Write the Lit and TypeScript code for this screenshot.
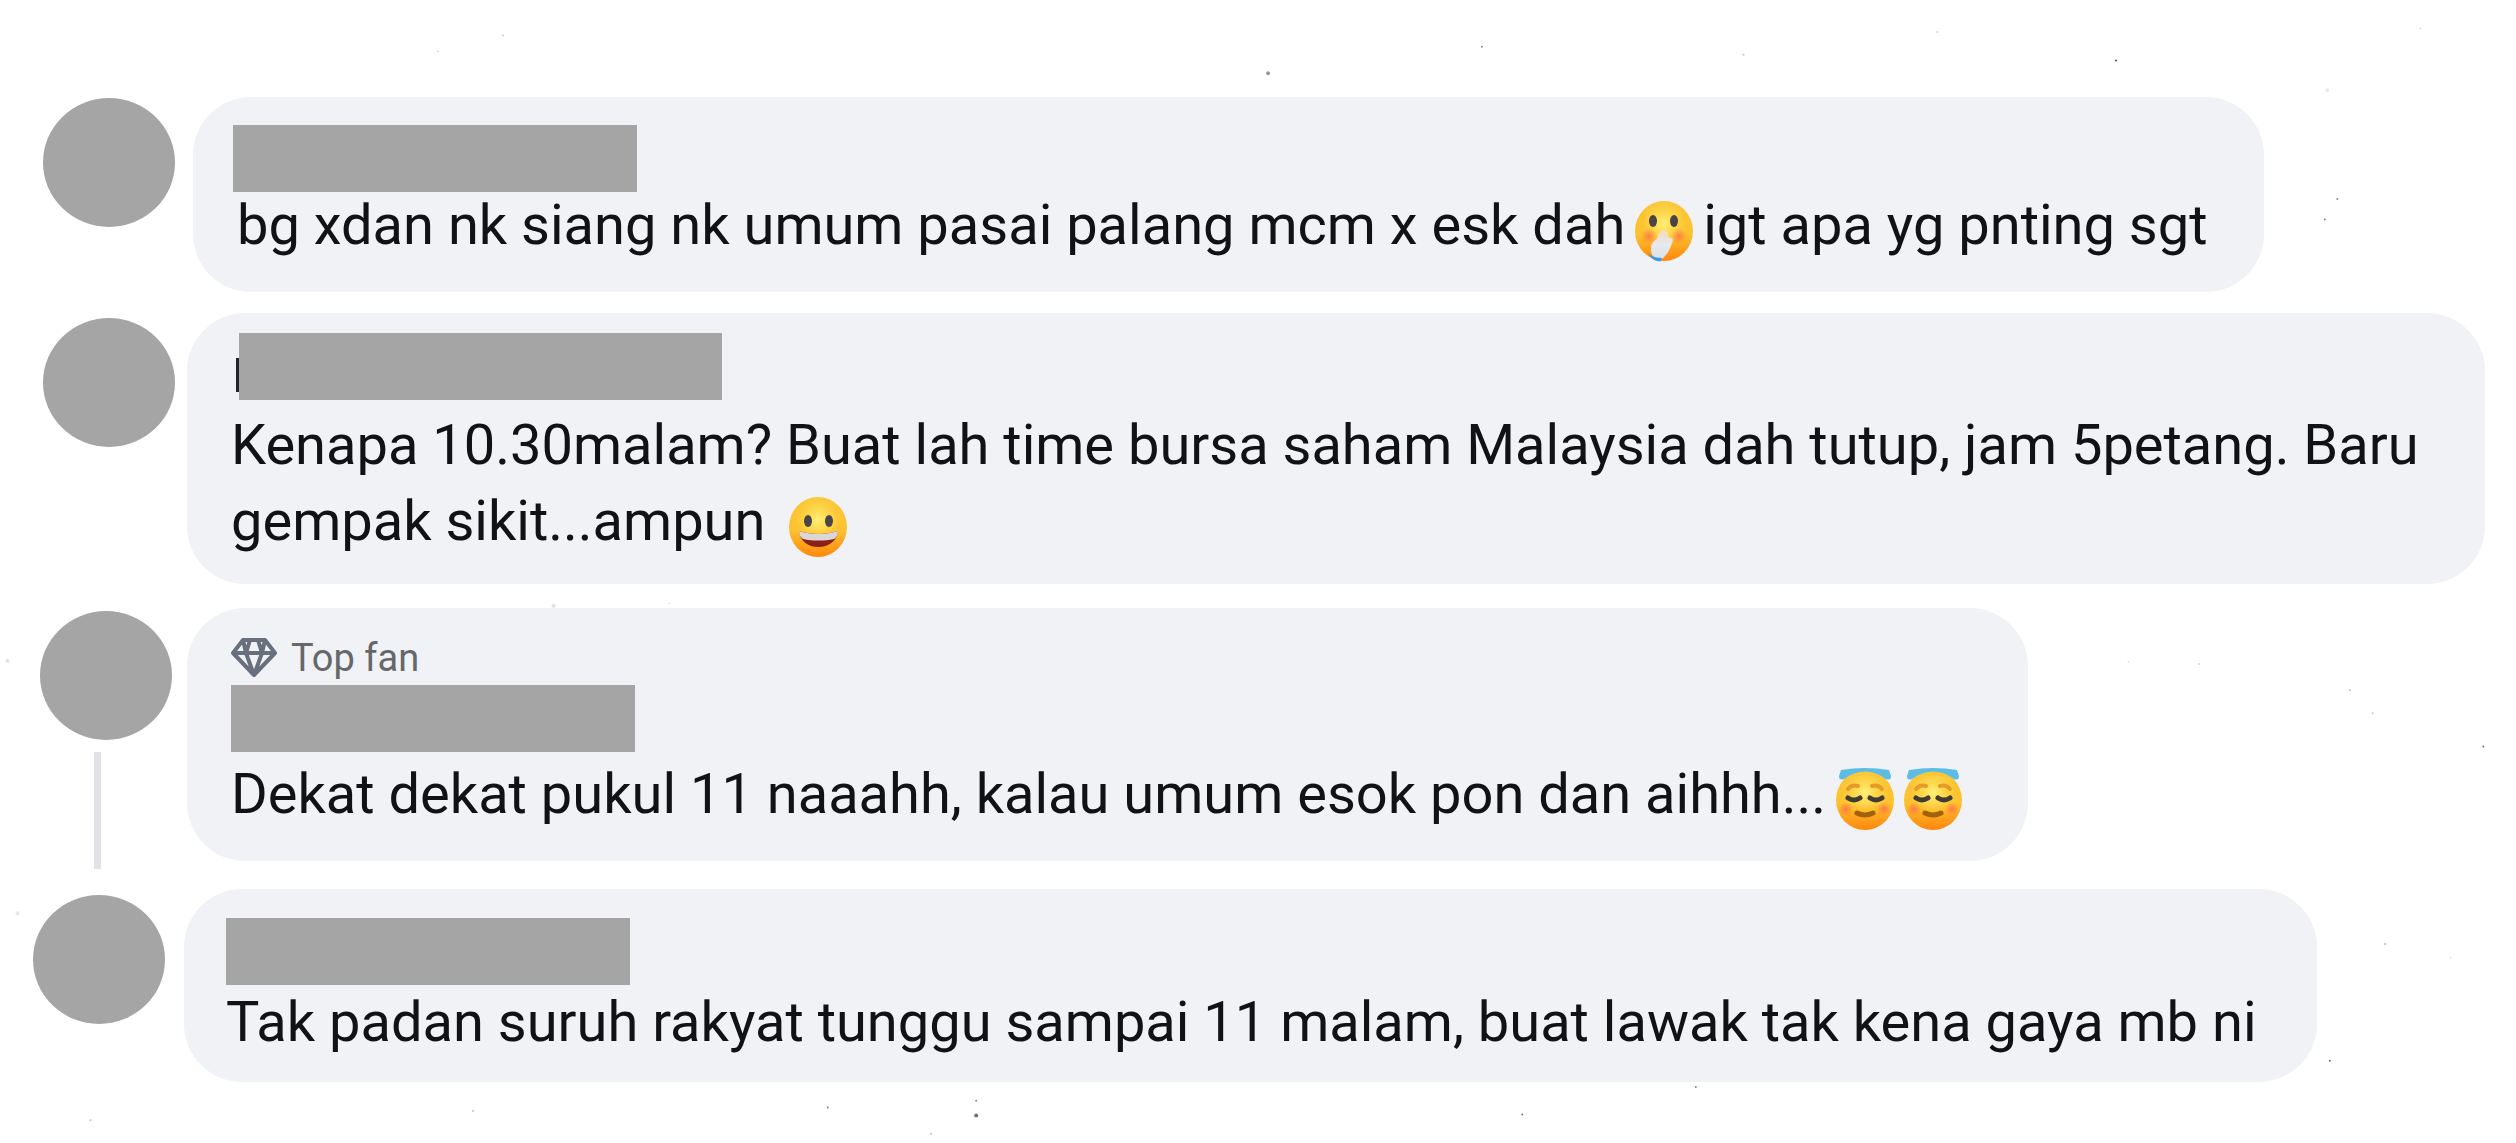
import { LitElement, html, svg, css, nothing, type TemplateResult } from "lit";
import { customElement, property } from "lit/decorators.js";

type Part = string | { emoji: "gasp" | "grin" | "halo"; label: string };

interface Comment {
  variant: string;
  topFan?: boolean;
  thread?: boolean;
  peek?: boolean;
  parts: Part[];
}

const COMMENTS: Comment[] = [
  {
    variant: "first",
    parts: [
      "bg xdan nk siang nk umum pasai palang mcm x esk dah",
      { emoji: "gasp", label: "🤭" },
      "igt apa yg pnting sgt",
    ],
  },
  {
    variant: "second",
    peek: true,
    parts: [
      "Kenapa 10.30malam? Buat lah time bursa saham Malaysia dah tutup, jam 5petang. Baru gempak sikit...ampun ",
      { emoji: "grin", label: "😀" },
    ],
  },
  {
    variant: "third",
    topFan: true,
    thread: true,
    parts: [
      "Dekat dekat pukul 11 naaahh, kalau umum esok pon dan aihhh...",
      { emoji: "halo", label: "😇" },
      { emoji: "halo", label: "😇" },
    ],
  },
  {
    variant: "fourth",
    parts: ["Tak padan suruh rakyat tunggu sampai 11 malam, buat lawak tak kena gaya mb ni"],
  },
];

/* x and y in percent of the page, radius in pixels, opacity */
const SPECKS: [number, number, number, number][] = [
  [50.4, 6.4, 2, 0.5], [84.1, 5.3, 1, 0.9], [58.9, 4.1, 1, 0.6], [69.3, 4.8, 1, 0.3],
  [20, 3.1, 1, 0.25], [17.4, 4.5, 1, 0.2], [92.9, 17.4, 1, 0.6], [92.4, 19.2, 1, 0.6],
  [92.5, 7.9, 2, 0.1], [38.8, 96.3, 1, 0.6], [38.8, 97.6, 2, 0.7], [32.9, 96.9, 1, 0.6],
  [60.5, 97.5, 1, 0.7], [92.6, 92.8, 1, 0.7], [67.4, 95.1, 1, 0.6], [18.8, 97.2, 1, 0.3],
  [37, 99.2, 1, 0.3], [94.8, 82.6, 1, 0.4], [97.4, 83.8, 1, 0.15], [98.7, 65.3, 1, 0.7],
  [93.4, 60.4, 1, 0.3], [94.3, 62.4, 1, 0.25], [0.3, 57.8, 2, 0.15], [0.7, 79.9, 2, 0.12],
  [22, 53, 2, 0.15], [26.6, 52.8, 1, 0.15], [84.6, 57.9, 1, 0.15], [87.4, 58.1, 1, 0.2],
  [77, 2.8, 1, 0.2], [96.2, 2.5, 1, 0.15], [3.6, 98, 1, 0.3],
];

const gradients = svg`
  <defs>
    <linearGradient id="skin" x1="0" y1="0" x2="0" y2="1">
      <stop offset="0" stop-color="#fbc638"/>
      <stop offset="0.55" stop-color="#fdc22f"/>
      <stop offset="1" stop-color="#fe870d"/>
    </linearGradient>
    <radialGradient id="glow" cx="0.5" cy="0.38" r="0.4">
      <stop offset="0" stop-color="#fff07a"/>
      <stop offset="1" stop-color="#ffe04a" stop-opacity="0"/>
    </radialGradient>
    <radialGradient id="blush">
      <stop offset="0" stop-color="#ff6e4e" stop-opacity="0.85"/>
      <stop offset="1" stop-color="#ff7a45" stop-opacity="0"/>
    </radialGradient>
    <linearGradient id="hand" x1="0" y1="0" x2="0" y2="1">
      <stop offset="0" stop-color="#f3dcc0"/>
      <stop offset="0.5" stop-color="#e8e8ee"/>
      <stop offset="1" stop-color="#dcdfe8"/>
    </linearGradient>
  </defs>`;

const face = svg`
  <ellipse cx="29" cy="33" rx="29" ry="30" fill="url(#skin)"/>
  <ellipse cx="29" cy="33" rx="29" ry="30" fill="url(#glow)"/>`;

const features = {
  gasp: svg`
    <ellipse cx="18" cy="23" rx="4" ry="6" fill="#4a4447"/>
    <ellipse cx="39" cy="23" rx="4" ry="6" fill="#4a4447"/>
    <circle cx="14" cy="38" r="8" fill="url(#blush)"/>
    <circle cx="44" cy="38" r="8" fill="url(#blush)"/>
    <path d="M29 32C32 32 33 36 34 40C37 39 39 41 37 45C35 52 31 59 25 62C19 61 16 57 16 51C16 46 18 43 22 41C23 36 26 32 29 32Z" fill="url(#hand)"/>
    <path d="M13 55C17 59 22 60 27 60L26 63C21 64 16 61 13 55Z" fill="#3499ea"/>`,
  grin: svg`
    <ellipse cx="19" cy="27" rx="4" ry="6" fill="#48464a"/>
    <ellipse cx="40" cy="27" rx="4" ry="6" fill="#48464a"/>
    <path d="M10 37C22 41 37 41 49 37C48 47 40 53 29 53C19 53 11 47 10 37Z" fill="#8a2114"/>
    <path d="M10 37C22 41 37 41 49 37C49 41 47 44 45 45C35 47 24 47 14 45C11 43 10 40 10 37Z" fill="#dcd6d8"/>`,
  halo: svg`
    <path d="M5 3Q29 -1 53 3L55 9Q55 14 50 12Q29 2 8 12Q3 14 3 9Z" fill="#5bbde6"/>
    <path d="M9 11Q29 -2 49 11Q29 6 9 11Z" fill="#fbc638"/>
    <path d="M12 22Q16 17 22 19M46 22Q42 17 36 19" fill="none" stroke="#e59b28" stroke-width="4" stroke-linecap="round"/>
    <path d="M12 31Q18 35 24 31M34 31Q40 35 46 31" fill="none" stroke="#403c35" stroke-width="5" stroke-linecap="round"/>
    <circle cx="10" cy="42" r="7" fill="url(#blush)"/>
    <circle cx="48" cy="42" r="7" fill="url(#blush)"/>
    <path d="M21 46Q29 50 37 46" fill="none" stroke="#a1620c" stroke-width="5" stroke-linecap="round"/>`,
};

@customElement("comment-row")
class CommentRow extends LitElement {
  static styles = css`
    :host { display: block; }
    .row { display: flex; align-items: stretch; padding-right: 31px; }
    .side { display: flex; flex-direction: column; flex: none; }
    .avatar { width: 132px; height: 129px; border-radius: 50%; background: #a5a5a5; }
    .thread { flex: 1; width: 7px; margin: 12px 0 -8px 54px; background: #e0e2e8; }
    .bubble { min-width: 0; border-radius: 58px; background: #f0f2f6; }
    .name { position: relative; width: 404px; height: 67px; background: #a5a5a5; }
    .name.long { width: 483px; margin-left: 8px; }
    .name.long::before {
      content: ""; position: absolute; left: -3px; top: 25px; width: 3px; height: 34px; background: #222326;
    }
    .text { margin: 0; font-size: 56px; line-height: 76px; color: #111214; }
    .badge { display: flex; align-items: center; gap: 14px; height: 48px; font-size: 38px; line-height: 48px; color: #65676b; }
    .diamond { width: 46px; height: 40px; }
    .emoji { width: 58px; height: 64px; margin: 0 10px; vertical-align: -18px; }
    .emoji + .emoji { margin-left: 0; }

    .first { padding-left: 43px; gap: 18px; }
    .first .side { padding-top: 1px; }
    .first .bubble { padding: 28px 56px 29px 40px; }
    .first .name { margin-bottom: -5px; }
    .first .text { padding-left: 4px; }

    .second { padding-left: 43px; gap: 12px; }
    .second .side { padding-top: 5px; }
    .second .bubble { padding: 20px 45px 25px 44px; }
    .second .name { margin-bottom: 7px; }

    .third { padding-left: 40px; gap: 15px; margin-top: 3px; }
    .third .side { padding-top: 3px; }
    .third .bubble { padding: 26px 56px 29px 44px; }
    .third .badge { margin-bottom: 3px; }
    .third .name { margin-bottom: 4px; }

    .fourth { padding-left: 33px; gap: 19px; margin-top: 7px; }
    .fourth .side { padding-top: 6px; }
    .fourth .bubble { padding: 29px 60px 22px 42px; }
    .fourth .name { margin-bottom: -1px; }
  `;

  @property({ attribute: false }) comment!: Comment;

  private part(p: Part): string | TemplateResult {
    if (typeof p === "string") return p;
    return html`<svg class="emoji" viewBox="0 0 58 64" role="img" aria-label=${p.label}>
      ${gradients}${face}${features[p.emoji]}
    </svg>`;
  }

  render() {
    const c = this.comment;
    return html`<article class="row ${c.variant}">
      <div class="side">
        <div class="avatar"></div>
        ${c.thread ? html`<div class="thread"></div>` : nothing}
      </div>
      <div class="bubble">
        ${c.topFan
          ? html`<div class="badge">
              <svg class="diamond" viewBox="0 0 46 40" aria-hidden="true">
                <path d="M12 2H34L44 15L23 37L2 15Z M2 15H44 M12 2L15 15L23 37L31 15L34 2 M15 15L19 2 M31 15L27 2"
                  fill="none" stroke="#69707d" stroke-width="4" stroke-linejoin="round"/>
              </svg>
              <span>Top fan</span>
            </div>`
          : nothing}
        <div class="name ${c.peek ? "long" : ""}"></div>
        <p class="text">${c.parts.map((p) => this.part(p))}</p>
      </div>
    </article>`;
  }
}

@customElement("app-root")
class AppRoot extends LitElement {
  static styles = css`
    :host {
      display: block; position: relative; min-height: 100vh; box-sizing: border-box; overflow: hidden;
      padding: 97px 0 60px; background: #fff; font-family: Roboto, "Open Sans", sans-serif;
    }
    .specks { position: absolute; inset: 0; width: 100%; height: 100%; pointer-events: none; }
    .list { display: flex; flex-direction: column; gap: 21px; }
  `;

  render() {
    return html`
      <svg class="specks" aria-hidden="true">
        ${SPECKS.map(([x, y, r, o]) => svg`<circle cx="${x}%" cy="${y}%" r=${r} opacity=${o} fill="#333"/>`)}
      </svg>
      <main class="list">
        ${COMMENTS.map((c) => html`<comment-row .comment=${c}></comment-row>`)}
      </main>`;
  }
}
